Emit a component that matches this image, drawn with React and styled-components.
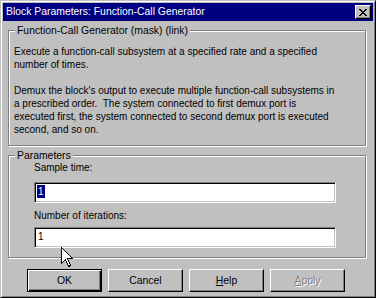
import React from "react";
import styled, { createGlobalStyle } from "styled-components";

const Global = createGlobalStyle`
  body {
    margin: 0;
    background: #c0c0c0;
  }
  * {
    box-sizing: border-box;
  }
`;

const Window = styled.div`
  position: relative;
  width: 376px;
  height: 298px;
  background: #c0c0c0;
  border: 1px solid;
  border-color: #c0c0c0 #000 #000 #c0c0c0;
  box-shadow: inset 1px 1px 0 #fff, inset -1px -1px 0 #808080;
  padding: 2px;
  display: flex;
  flex-direction: column;
  font-family: "Liberation Sans", Arial, sans-serif;
  font-size: 10px;
  color: #000;
`;

const TitleBar = styled.div`
  height: 18px;
  background: #000080;
  display: flex;
  align-items: center;
  justify-content: space-between;
  padding: 0 2px 0 3px;
`;

const Title = styled.span`
  color: #fff;
  font-size: 10.4px;
  line-height: 18px;
  white-space: nowrap;
`;

const CloseButton = styled.div`
  width: 16px;
  height: 14px;
  background: #c0c0c0;
  border: 1px solid;
  border-color: #fff #000 #000 #fff;
  box-shadow: inset -1px -1px 0 #808080;
  display: flex;
  align-items: center;
  justify-content: center;

  svg {
    display: block;
  }
`;

const Content = styled.div`
  flex: 1;
  display: flex;
  flex-direction: column;
  padding: 9px 7px 0 5px;
`;

const Group = styled.div`
  height: ${(p) => p.$h}px;
  margin-top: ${(p) => p.$top || 0}px;
  border: 1px solid #808080;
  box-shadow: inset 1px 1px 0 #fff, 1px 1px 0 #fff;
  display: flex;
  flex-direction: column;
  align-items: flex-start;
`;

const Legend = styled.div`
  margin: -7px 0 0 6px;
  padding: 0 2px;
  height: 13px;
  line-height: 13px;
  background: #c0c0c0;
  font-size: 10.4px;
  white-space: nowrap;
`;

const Description = styled.p`
  margin: 8px 0 0 5px;
  line-height: 13px;
  white-space: nowrap;
`;

const Label = styled.div`
  margin: ${(p) => p.$top}px 0 0 25px;
  line-height: 13px;
  white-space: nowrap;
`;

const Input = styled.div`
  margin: ${(p) => p.$top}px 0 0 25px;
  width: 302px;
  height: 21px;
  background: #fff;
  border: 1px solid;
  border-color: #808080 #fff #fff #808080;
  box-shadow: inset 1px 1px 0 #000, inset -1px -1px 0 #c0c0c0;
  padding: 2px 0 0 2px;
  line-height: 13px;
`;

const Selected = styled.span`
  display: inline-block;
  background: #000080;
  color: #fff;
  padding: 0 1px;
  height: 13px;
`;

const Plain = styled.span`
  display: inline-block;
  padding: 0 1px;
`;

const ButtonRow = styled.div`
  margin-top: 11px;
  display: flex;
  justify-content: center;
  gap: 6px;
  padding-right: 2px;
`;

const Button = styled.div`
  width: 75px;
  height: 23px;
  display: flex;
  align-items: center;
  justify-content: center;
  border: 1px solid;
  border-color: ${(p) => (p.$default ? "#000" : "#fff #000 #000 #fff")};
  box-shadow: ${(p) =>
    p.$default
      ? "inset 1px 1px 0 #fff, inset -1px -1px 0 #000, inset -2px -2px 0 #808080"
      : "inset -1px -1px 0 #808080"};
  color: ${(p) => (p.$disabled ? "#808080" : "#000")};
  text-shadow: ${(p) => (p.$disabled ? "1px 1px 0 #fff" : "none")};
  font-size: 10.4px;

  u {
    text-decoration: underline;
  }
`;

const Cursor = styled.svg`
  position: absolute;
  left: 60px;
  top: 246px;
`;

export default function App() {
  return (
    <>
      <Global />
      <Window>
        <TitleBar>
          <Title>Block Parameters: Function-Call Generator</Title>
          <CloseButton>
            <svg width="8" height="7" viewBox="0 0 8 7" shapeRendering="crispEdges">
              <path
                d="M0 0h2v1h-2zM6 0h2v1h-2zM1 1h2v1h-2zM5 1h2v1h-2zM2 2h4v1h-4zM3 3h2v1h-2zM2 4h4v1h-4zM1 5h2v1h-2zM5 5h2v1h-2zM0 6h2v1h-2zM6 6h2v1h-2z"
                fill="#000"
              />
            </svg>
          </CloseButton>
        </TitleBar>

        <Content>
          <Group $h={116}>
            <Legend>Function-Call Generator (mask) (link)</Legend>
            <Description>
              Execute a function-call subsystem at a specified rate and a specified
              <br />
              number of times.
              <br />
              <br />
              Demux the block's output to execute multiple function-call subsystems in
              <br />
              a prescribed order.&nbsp; The system connected to first demux port is
              <br />
              executed first, the system connected to second demux port is executed
              <br />
              second, and so on.
            </Description>
          </Group>

          <Group $h={103} $top={9}>
            <Legend>Parameters</Legend>
            <Label $top={-1}>Sample time:</Label>
            <Input $top={8}>
              <Selected>1</Selected>
            </Input>
            <Label $top={6}>Number of iterations:</Label>
            <Input $top={5}>
              <Plain>1</Plain>
            </Input>
          </Group>

          <ButtonRow>
            <Button $default>OK</Button>
            <Button>Cancel</Button>
            <Button>
              <span>
                <u>H</u>elp
              </span>
            </Button>
            <Button $disabled>
              <span>
                <u>A</u>pply
              </span>
            </Button>
          </ButtonRow>
        </Content>

        <Cursor width="13" height="21" viewBox="0 0 13 21" shapeRendering="crispEdges">
          <path
            d="M0.5 0.5 L0.5 16.5 L4.5 12.5 L7.5 19.5 L9.5 18.5 L6.5 11.5 L11.5 11.5 Z"
            fill="#fff"
            stroke="#000"
            strokeWidth="1"
          />
        </Cursor>
      </Window>
    </>
  );
}
